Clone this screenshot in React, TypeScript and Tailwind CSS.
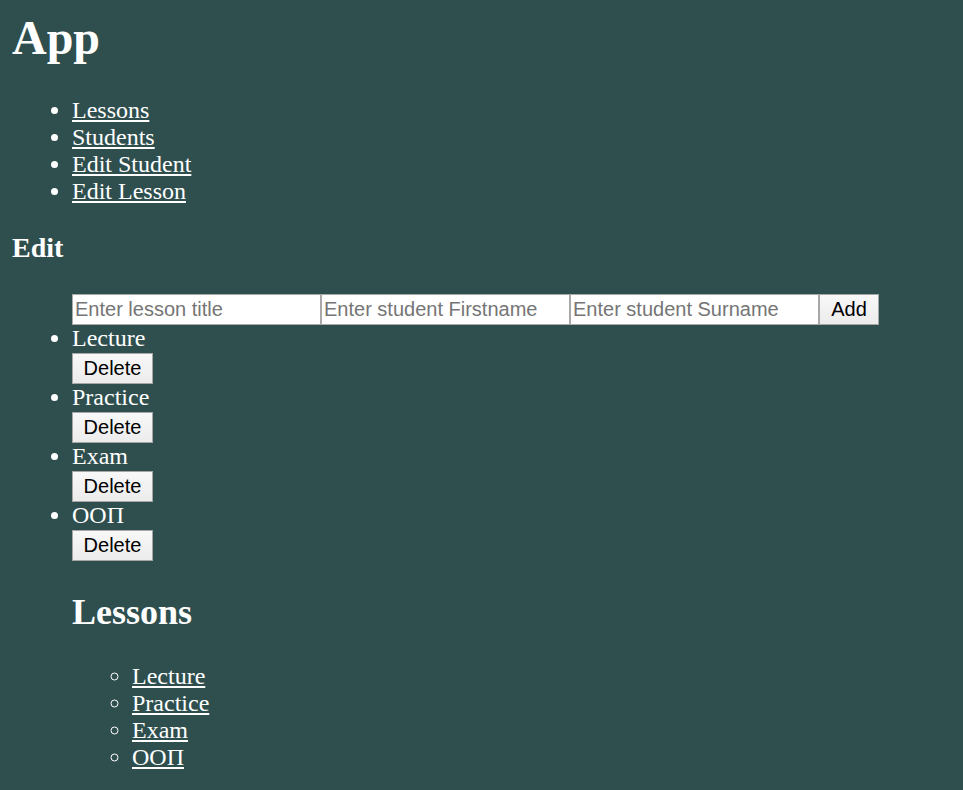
import React from 'react';

const navLinks = ['Lessons', 'Students', 'Edit Student', 'Edit Lesson'];
const lessons = ['Lecture', 'Practice', 'Exam', 'ООП'];

const inputCls =
  "h-[31px] w-[249px] border border-[#a9a9a9] bg-white px-[2px] font-['Liberation_Sans',Arial,sans-serif] text-[20px] leading-[23px] text-black outline-none placeholder:text-[#757575]";

const btnCls =
  "block h-[31px] border border-[#a6a6a6] bg-gradient-to-b from-[#f8f8f8] to-[#ececec] font-['Liberation_Sans',Arial,sans-serif] text-[20px] leading-[23px] text-black";

const App: React.FC = () => {
  return (
    <div className="min-h-screen bg-[#2f4f4f] px-3 pb-6 font-['Liberation_Serif','Times_New_Roman',serif] text-[24px] leading-[27px] text-white">
      <h1 className="pt-[10px] text-[48px] font-bold leading-[55px]">App</h1>

      <ul className="mt-[32px] list-disc pl-[60px]">
        {navLinks.map((l) => (
          <li key={l}>
            <a href="#" className="text-white underline">
              {l}
            </a>
          </li>
        ))}
      </ul>

      <h3 className="mt-[27px] text-[28px] font-bold leading-[32px]">Edit</h3>

      <ul className="mt-[29px] list-disc pl-[60px]">
        <li className="list-none">
          <form className="flex h-[32px] pt-px" onSubmit={(e) => e.preventDefault()}>
            <input className={inputCls} placeholder="Enter lesson title" />
            <input className={inputCls} placeholder="Enter student Firstname" />
            <input className={inputCls} placeholder="Enter student Surname" />
            <button type="submit" className={`${btnCls} w-[60px]`}>
              Add
            </button>
          </form>
        </li>

        {lessons.map((l) => (
          <li key={l}>
            <span className="block">{l}</span>
            <div className="pt-px">
              <button className={`${btnCls} w-[81px]`}>Delete</button>
            </div>
          </li>
        ))}

        <li className="list-none">
          <h2 className="mt-[30px] text-[36px] font-bold leading-[42px]">Lessons</h2>
          <ul className="mt-[30px] list-[circle] pl-[60px]">
            {lessons.map((l) => (
              <li key={l}>
                <a href="#" className="text-white underline">
                  {l}
                </a>
              </li>
            ))}
          </ul>
        </li>
      </ul>
    </div>
  );
};

export default App;
